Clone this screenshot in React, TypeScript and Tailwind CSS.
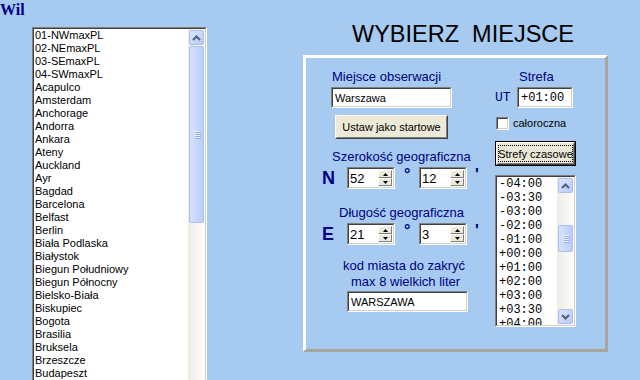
import { clsx } from "clsx";
import type { ReactNode } from "react";

const miasta = [
  "01-NWmaxPL",
  "02-NEmaxPL",
  "03-SEmaxPL",
  "04-SWmaxPL",
  "Acapulco",
  "Amsterdam",
  "Anchorage",
  "Andorra",
  "Ankara",
  "Ateny",
  "Auckland",
  "Ayr",
  "Bagdad",
  "Barcelona",
  "Belfast",
  "Berlin",
  "Biała Podlaska",
  "Białystok",
  "Biegun Południowy",
  "Biegun Północny",
  "Bielsko-Biała",
  "Biskupiec",
  "Bogota",
  "Brasilia",
  "Bruksela",
  "Brzeszcze",
  "Budapeszt",
];

const strefy = ["-04:00", "-03:30", "-03:00", "-02:00", "-01:00", "+00:00", "+01:00", "+02:00", "+03:00", "+03:30", "+04:00"];

// wklęsła ramka jak w starych kontrolkach Windows
function Sunken({ className, innerClassName, children }: { className?: string; innerClassName?: string; children?: ReactNode }) {
  return (
    <div className={clsx("shrink-0 border border-t-[#808080] border-l-[#808080] border-r-white border-b-white", className)}>
      <div
        className={clsx(
          "h-full w-full overflow-hidden border border-t-[#404040] border-l-[#404040] border-r-[#d4d0c8] border-b-[#d4d0c8] bg-white",
          innerClassName
        )}
      >
        {children}
      </div>
    </div>
  );
}

function Raised({ className, children }: { className?: string; children?: ReactNode }) {
  return (
    <div className={clsx("shrink-0 border border-t-white border-l-white border-r-[#404040] border-b-[#404040] bg-[#ece9d8]", className)}>
      <div className="flex h-full w-full items-center justify-center border border-t-[#ece9d8] border-l-[#ece9d8] border-r-[#808080] border-b-[#808080]">
        {children}
      </div>
    </div>
  );
}

function ScrollButton({ dir }: { dir: "up" | "down" }) {
  return (
    <div className="h-[17px] w-[17px] shrink-0 p-px">
      <div className="flex h-full w-full items-center justify-center rounded-[2px] border border-[#a8bef5] bg-linear-to-br from-[#dde6fe] to-[#b8caf8]">
        <svg width="9" height="6" viewBox="0 0 9 6">
          <polyline
            points={dir === "up" ? "1,5 4.5,1.5 8,5" : "1,1 4.5,4.5 8,1"}
            fill="none"
            stroke="#4d6185"
            strokeWidth="2"
          />
        </svg>
      </div>
    </div>
  );
}

function Scrollbar({ thumbClassName }: { thumbClassName: string }) {
  return (
    <div className="flex h-full w-[17px] shrink-0 flex-col bg-linear-to-r from-[#eeede5] to-[#fdfdfa]">
      <ScrollButton dir="up" />
      <div className="flex-1">
        <div
          className={clsx(
            "mx-px flex items-center justify-center rounded-[2px] border border-[#a8bef5] bg-linear-to-r from-[#d6e1fd] to-[#bccdf9]",
            thumbClassName
          )}
        >
          <div className="flex flex-col gap-px">
            {[0, 1, 2, 3].map((i) => (
              <div key={i} className="h-px w-[6px] bg-[#eef3fe] shadow-[1px_1px_0_#8cb0f8]" />
            ))}
          </div>
        </div>
      </div>
      <ScrollButton dir="down" />
    </div>
  );
}

function SpinButton({ up }: { up?: boolean }) {
  return (
    <div className="flex h-[8px] w-full items-center justify-center border border-t-white border-l-white border-r-[#808080] border-b-[#808080] bg-[#ece9d8]">
      <svg width="5" height="3" viewBox="0 0 5 3">
        <polygon points={up ? "2.5,0 5,3 0,3" : "0,0 5,0 2.5,3"} fill="#000" />
      </svg>
    </div>
  );
}

function Spin({ value }: { value: string }) {
  return (
    <Sunken className="h-[22px] w-[48px]" innerClassName="flex items-center">
      <span className="flex-1 pl-px text-[13px] leading-none text-black">{value}</span>
      <div className="my-px mr-px flex h-[16px] w-[14px] flex-col">
        <SpinButton up />
        <SpinButton />
      </div>
    </Sunken>
  );
}

function WspolrzednaRow({ litera, stopnie, minuty }: { litera: string; stopnie: string; minuty: string }) {
  return (
    <div className="mt-[2px] flex h-[22px] items-start">
      <span className="w-[25px] self-center text-[18px] font-bold leading-none">{litera}</span>
      <Spin value={stopnie} />
      <span className="w-[24px] pl-[9px] text-[16px] font-bold leading-none">°</span>
      <Spin value={minuty} />
      <span className="pl-[8px] text-[16px] font-bold leading-none">'</span>
    </div>
  );
}

export default function App() {
  return (
    <div className="flex h-[380px] w-[640px] overflow-hidden bg-[#a6caf0] font-['Liberation_Sans',Arial,sans-serif]">
      {/* lista miejsc */}
      <div className="w-[303px] shrink-0">
        <div className="pt-px font-['Liberation_Serif',serif] text-[16px] font-bold leading-[18px] text-[#000080]">Wil</div>
        <Sunken className="ml-8 mt-2 h-[400px] w-[175px]" innerClassName="flex">
          <ul className="flex-1 pl-px">
            {miasta.map((m) => (
              <li key={m} className="h-[13px] whitespace-nowrap text-[11px] leading-[13px] text-black">
                {m}
              </li>
            ))}
          </ul>
          <Scrollbar thumbClassName="h-[177px]" />
        </Sunken>
      </div>

      {/* panel wyboru */}
      <div className="w-[305px] shrink-0 pt-5">
        <h1 className="whitespace-pre pl-[49px] text-[23.5px] font-normal leading-[28px] text-black">WYBIERZ  MIEJSCE</h1>
        <div className="mt-[7px] flex h-[297px] items-start border-[3px] border-t-white border-l-white border-r-[#a6a69e] border-b-[#a6a69e] pl-4 pt-[11px]">
          <div className="w-[160px] shrink-0 whitespace-nowrap text-[13px] leading-4 text-[#000080]">
            <div className="pl-[10px]">Miejsce obserwacji</div>
            <Sunken className="ml-[9px] mt-[2px] h-[21px] w-[121px]" innerClassName="flex items-center">
              <span className="pl-[2px] text-[11px] text-black">Warszawa</span>
            </Sunken>
            <Raised className="ml-[13px] mt-[7px] h-[24px] w-[113px]">
              <span className="text-[11px] text-black">Ustaw jako startowe</span>
            </Raised>
            <div className="mt-[10px] pl-[10px]">Szerokość geograficzna</div>
            <WspolrzednaRow litera="N" stopnie="52" minuty="12" />
            <div className="mt-4 pl-[17px]">Długość geograficzna</div>
            <WspolrzednaRow litera="E" stopnie="21" minuty="3" />
            <div className="mt-[13px] pl-[21px]">kod miasta do zakryć</div>
            <div className="pl-[29px]">max 8 wielkich liter</div>
            <Sunken className="ml-[25px] mt-px h-[21px] w-[121px]" innerClassName="flex items-center">
              <span className="pl-[2px] text-[11px] text-black">WARSZAWA</span>
            </Sunken>
          </div>

          <div className="ml-[13px] w-[81px] shrink-0">
            <div className="pl-6 text-[13px] leading-4 text-[#000080]">Strefa</div>
            <div className="mt-[2px] flex items-center">
              <span className="w-[22px] font-['Liberation_Mono',monospace] text-[13px] text-[#000080]">UT</span>
              <Sunken className="h-[21px] w-[56px]" innerClassName="flex items-center">
                <span className="pl-[2px] font-['Liberation_Mono',monospace] text-[12px] text-black">+01:00</span>
              </Sunken>
            </div>
            <div className="mt-[9px] flex items-center">
              <Sunken className="ml-px h-[13px] w-[13px]" />
              <span className="ml-1 text-[11px] leading-[13px] text-black">całoroczna</span>
            </div>
            <div className="mt-[11px] h-[25px] w-[81px] border border-black">
              <Raised className="h-full w-full">
                <div className="mx-px flex h-[17px] w-full items-center justify-center whitespace-nowrap border border-dotted border-black text-[11px] leading-[14px] text-black">
                  Strefy czasowe
                </div>
              </Raised>
            </div>
            <Sunken className="mt-[9px] h-[152px] w-[81px]" innerClassName="flex">
              <ul className="flex-1 pl-[2px]">
                {strefy.map((s) => (
                  <li key={s} className="h-[14px] font-['Liberation_Mono',monospace] text-[12px] leading-[14px] text-black">
                    {s}
                  </li>
                ))}
              </ul>
              <Scrollbar thumbClassName="mt-[31px] h-[27px]" />
            </Sunken>
          </div>
        </div>
      </div>
    </div>
  );
}
